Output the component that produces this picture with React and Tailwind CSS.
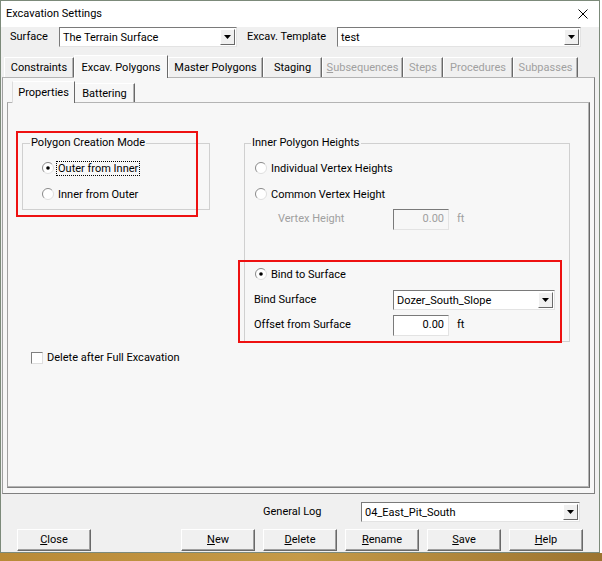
import React from 'react';

const Arrow = () => (
  <svg width="7" height="4" viewBox="0 0 7 4">
    <path d="M0 0h7L3.5 4z" fill="#000" />
  </svg>
);

const Combo = ({ value, className }) => (
  <div className={`flex h-[20px] items-center border border-t-[#7a7a7a] border-l-[#7a7a7a] border-r-[#e3e3e3] border-b-[#e3e3e3] bg-white ${className}`}>
    <span className="flex-1 truncate pl-[3px] pt-[1px] leading-[16px]">{value}</span>
    <span className="mr-[1px] flex h-[16px] w-[15px] items-center justify-center border border-t-white border-l-white border-r-[#696969] border-b-[#696969] bg-[#f0f0f0]">
      <Arrow />
    </span>
  </div>
);

const TextBox = ({ value, disabled }) => (
  <div className={`flex h-[21px] w-[56px] items-center justify-end border border-t-[#7a7a7a] border-l-[#7a7a7a] border-r-[#e3e3e3] border-b-[#e3e3e3] pr-[4px] ${disabled ? 'bg-[#f7f7f7] text-[#a0a0a0]' : 'bg-white text-black'}`}>
    {value}
  </div>
);

const Radio = ({ label, checked, focused, className = '' }) => (
  <div className={`flex h-[16px] items-center ${className}`}>
    <svg width="12" height="12" viewBox="0 0 12 12">
      <circle cx="6" cy="6" r="5.5" fill="#fff" />
      <path d="M9.9 2.1A5.5 5.5 0 0 0 2.1 9.9" stroke="#8a8a8a" fill="none" />
      <path d="M2.1 9.9A5.5 5.5 0 0 0 9.9 2.1" stroke="#dedede" fill="none" />
      {checked && <circle cx="6" cy="6" r="1.8" fill="#000" />}
    </svg>
    <span className={`ml-[2px] border px-[1px] leading-[13px] ${focused ? 'border-dotted border-black' : 'border-transparent'}`}>{label}</span>
  </div>
);

const Tab = ({ label, w, selected, disabled, u }) => (
  <div
    className={`flex items-center justify-center whitespace-nowrap border-t border-l border-r border-t-white border-l-white border-r-[#696969] pt-[2px] ${
      selected
        ? 'relative z-10 -mb-[1px] h-[23px] bg-[#f7f7f7]'
        : 'mt-[2px] h-[20px] bg-[#f0f0f0] shadow-[inset_-1px_0_0_#b4b4b4]'
    } ${disabled ? 'text-[#a0a0a0]' : 'text-black'}`}
    style={{ width: w }}
  >
    {u ? (
      <span>
        <span className="underline">{label[0]}</span>
        {label.slice(1)}
      </span>
    ) : (
      label
    )}
  </div>
);

const Button = ({ label, className = '' }) => (
  <div className={`flex h-[22px] w-[74px] items-center justify-center border border-t-white border-l-white border-r-[#696969] border-b-[#696969] bg-[#f0f0f0] pt-[1px] shadow-[inset_-1px_-1px_0_#a0a0a0] ${className}`}>
    <span>
      <span className="underline">{label[0]}</span>
      {label.slice(1)}
    </span>
  </div>
);

export default function App() {
  const tabs = [
    { label: 'Constraints', w: 70 },
    { label: 'Excav. Polygons', w: 94, selected: true },
    { label: 'Master Polygons', w: 95 },
    { label: 'Staging', w: 59 },
    { label: 'Subsequences', w: 81, disabled: true, u: true },
    { label: 'Steps', w: 40, disabled: true },
    { label: 'Procedures', w: 70, disabled: true },
    { label: 'Subpasses', w: 65, disabled: true },
  ];

  return (
    <div className="flex h-[561px] w-[602px] flex-col bg-white font-['Roboto',sans-serif] text-[11px] text-black">
      {/* Dialog window */}
      <div className="flex h-[553px] w-[600px] flex-col border border-[#7c8a7a] bg-[#f0f0f0]">
        {/* Title bar */}
        <div className="flex h-[26px] items-center justify-between bg-white pl-[5px] pr-[11px]">
          <span>Excavation Settings</span>
          <svg width="10" height="10" viewBox="0 0 10 10">
            <path d="M0.5 0.5l9 9M9.5 0.5l-9 9" stroke="#000" strokeWidth="1" />
          </svg>
        </div>

        {/* Surface / template */}
        <div className="flex h-[20px] items-center pl-[9px]">
          <span className="w-[49px] pt-[1px]">Surface</span>
          <Combo value="The Terrain Surface" className="w-[178px]" />
          <span className="ml-[10px] w-[90px] pt-[1px]">Excav. Template</span>
          <Combo value="test" className="w-[244px]" />
        </div>

        {/* Outer tabs */}
        <div className="mt-[8px] flex h-[22px] pl-[3px]">
          {tabs.map((t) => (
            <Tab key={t.label} {...t} />
          ))}
        </div>
        <div className="ml-[1px] h-[417px] w-[593px] border border-t-[#b4b4b4] border-l-[#a0a0a0] border-r-[#808080] border-b-[#808080] bg-[#f7f7f7]">
          {/* Inner tabs */}
          <div className="ml-[9px] mt-[3px] flex h-[21px]">
            <div className="relative z-10 -mb-[1px] flex h-[22px] w-[63px] items-center justify-center border-t border-l border-r border-t-white border-l-[#dcdcdc] border-r-[#696969] bg-[#f7f7f7] pt-[2px]">
              Properties
            </div>
            <div className="mt-[2px] flex h-[19px] w-[60px] items-center justify-center border-t border-r border-t-white border-r-[#696969] pt-[2px] shadow-[inset_-1px_0_0_#b4b4b4]">
              Battering
            </div>
          </div>
          <div className="relative ml-[4px] h-[386px] w-[583px] border border-t-[#b4b4b4] border-l-[#a0a0a0] border-r-[#696969] border-b-[#808080] shadow-[inset_-1px_-1px_0_#b4b4b4]">
            <div className="flex items-start pl-[14px] pt-[32px]">
              <fieldset className="h-[75px] w-[188px] border border-[#d0d0d0] p-0">
                <legend className="ml-[7px] px-[1px] leading-[16px]">Polygon Creation Mode</legend>
                <div className="pl-[19px] pt-[9px]">
                  <Radio label="Outer from Inner" checked focused />
                  <Radio label="Inner from Outer" className="mt-[10px]" />
                </div>
              </fieldset>

              <fieldset className="ml-[34px] h-[207px] w-[326px] border border-[#d0d0d0] p-0">
                <legend className="ml-[6px] px-[1px] leading-[16px]">Inner Polygon Heights</legend>
                <div className="pl-[9px] pt-[9px]">
                  <Radio label="Individual Vertex Heights" className="ml-[1px]" />
                  <Radio label="Common Vertex Height" className="ml-[1px] mt-[10px]" />
                  <div className="mt-[7px] flex h-[21px] items-center">
                    <span className="ml-[24px] w-[115px] text-[#a0a0a0]">Vertex Height</span>
                    <TextBox value="0.00" disabled />
                    <span className="ml-[8px] text-[#a0a0a0]">ft</span>
                  </div>
                  <Radio label="Bind to Surface" checked className="ml-[1px] mt-[36px]" />
                  <div className="mt-[8px] flex h-[20px] items-center">
                    <span className="w-[139px]">Bind Surface</span>
                    <Combo value="Dozer_South_Slope" className="w-[162px]" />
                  </div>
                  <div className="mt-[5px] flex h-[21px] items-center">
                    <span className="w-[139px]">Offset from Surface</span>
                    <TextBox value="0.00" />
                    <span className="ml-[8px]">ft</span>
                  </div>
                </div>
              </fieldset>
            </div>

            <div className="mt-[8px] flex h-[16px] items-center pl-[23px]">
              <span className="h-[12px] w-[12px] border border-t-[#808080] border-l-[#808080] border-r-[#dedede] border-b-[#dedede] bg-white" />
              <span className="ml-[4px]">Delete after Full Excavation</span>
            </div>

            {/* annotation highlights */}
            <div className="absolute left-[8px] top-[28px] h-[86px] w-[182px] border-2 border-[#ee1111]" />
            <div className="absolute left-[230px] top-[157px] h-[83px] w-[324px] border-2 border-[#ee1111]" />
          </div>
        </div>

        {/* General log */}
        <div className="mt-[8px] flex h-[20px] items-center pl-[262px]">
          <span className="w-[98px] pt-[1px]">General Log</span>
          <Combo value="04_East_Pit_South" className="w-[219px]" />
        </div>

        {/* Buttons */}
        <div className="mt-[7px] flex pl-[16px]">
          <Button label="Close" />
          <Button label="New" className="ml-[90px]" />
          <Button label="Delete" className="ml-[8px]" />
          <Button label="Rename" className="ml-[8px]" />
          <Button label="Save" className="ml-[8px]" />
          <Button label="Help" className="ml-[8px]" />
        </div>
      </div>
      <div className="h-[8px] w-full bg-gradient-to-r from-[#b98a36] via-[#c59a48] to-[#9c7430]" />
    </div>
  );
}
